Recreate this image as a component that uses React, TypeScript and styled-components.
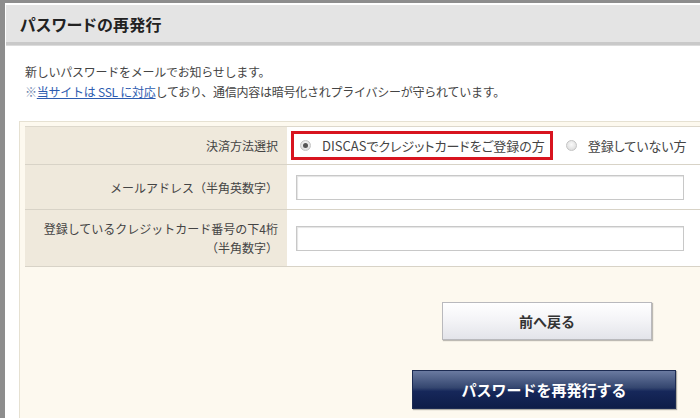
import styled, { createGlobalStyle } from 'styled-components';

const GlobalStyle = createGlobalStyle`
  html, body {
    margin: 0;
    padding: 0;
    background: #fff;
    overflow: hidden;
  }
  body {
    font-family: "Noto Sans CJK JP", "Noto Sans", sans-serif;
    color: #333;
  }
`;

const Page = styled.div`
  width: 740px;
  min-height: 418px;
  box-sizing: border-box;
  border-left: 5px solid #8d8d8d;
  border-top: 3px solid #8d8d8d;
  padding: 2px 0 0 1px;
`;

const Header = styled.div`
  height: 37px;
  background: #e4e4e4;
  border-bottom: 3px solid #c9c9c9;
  box-shadow: 0 1px 0 #dcdcdc;
  display: flex;
  align-items: center;
  padding-left: 14px;
`;

const Title = styled.h1`
  margin: 0;
  font-size: 16px;
  font-weight: 700;
  color: #222;
  letter-spacing: 0.3px;
  font-feature-settings: "palt";
`;

const Intro = styled.div`
  padding: 17px 0 0 19px;
  font-size: 12px;
  line-height: 20px;
  letter-spacing: -0.25px;
  color: #444;
`;

const Mark = styled.span`
  color: #6f86ad;
`;

const TextLink = styled.a`
  color: #2d5cb0;
  text-decoration: underline;
`;

const FormBox = styled.div`
  margin: 19px 0 0 13px;
  border: 1px solid #e6e1d2;
  border-right: none;
  background: #fdf9ef;
  padding: 4px 0 10px 5px;
`;

const Table = styled.div`
  display: grid;
  grid-template-columns: 262px 1fr;
  border-top: 1px solid #ddd8cc;
`;

const Label = styled.div<{ $h: number }>`
  height: ${(p) => p.$h}px;
  box-sizing: border-box;
  background: #efe9dc;
  border-bottom: 1px solid #d8d3c7;
  display: flex;
  flex-direction: column;
  justify-content: center;
  align-items: flex-end;
  padding-right: 9px;
  font-size: 12px;
  line-height: 19px;
  color: #444;
  text-align: right;
`;

const Cell = styled.div<{ $h: number }>`
  height: ${(p) => p.$h}px;
  box-sizing: border-box;
  background: #fff;
  border-bottom: 1px solid #d8d3c7;
  display: flex;
  align-items: center;
  padding-left: 9px;
`;

const RadioGroup = styled.div`
  display: flex;
  align-items: center;
  margin-left: -5px;
  font-size: 13px;
  font-feature-settings: "palt";
  color: #444;
`;

const RadioOption = styled.label<{ $marked?: boolean }>`
  display: flex;
  align-items: center;
  gap: 11px;
  height: 29px;
  box-sizing: border-box;
  padding: 0 5px 0 6px;
  border: 3px solid ${(p) => (p.$marked ? '#d8141f' : 'transparent')};
  margin-right: 4px;
`;

const Dot = styled.span<{ $on?: boolean }>`
  width: 11px;
  height: 11px;
  border-radius: 50%;
  box-sizing: border-box;
  border: 1px solid #c4c4c4;
  background: radial-gradient(circle at 50% 40%, #fafafa, #d6d6d6);
  display: flex;
  align-items: center;
  justify-content: center;
  &::after {
    content: '';
    width: 5px;
    height: 5px;
    border-radius: 50%;
    background: ${(p) => (p.$on ? '#555' : 'transparent')};
  }
`;

const TextInput = styled.input`
  width: 388px;
  height: 25px;
  box-sizing: border-box;
  border: 1px solid #c8c8c8;
  box-shadow: inset 1px 1px 1px #e4e4e4;
  background: #fff;
  outline: none;
`;

const Buttons = styled.div`
  width: 264px;
  margin: 35px 0 0 387px;
  display: flex;
  flex-direction: column;
  align-items: center;
  gap: 30px;
`;

const BackButton = styled.button`
  width: 210px;
  height: 38px;
  margin-left: 6px;
  border: 1px solid #b9b9bd;
  background: linear-gradient(#ffffff, #f3f3f6 50%, #e3e4ea);
  box-shadow: 1px 1px 1px rgba(0, 0, 0, 0.25);
  font-family: inherit;
  font-size: 14px;
  font-weight: 700;
  color: #333;
  cursor: pointer;
`;

const SubmitButton = styled.button`
  width: 264px;
  height: 39px;
  border: 1px solid #1c2b52;
  background: linear-gradient(#6a7aa0, #34466f 45%, #16275a 55%, #0e1d48);
  box-shadow: 1px 1px 1px rgba(0, 0, 0, 0.3);
  font-family: inherit;
  font-size: 15px;
  font-weight: 700;
  color: #fff;
  cursor: pointer;
`;

export default function App() {
  return (
    <>
      <GlobalStyle />
      <Page>
        <Header>
          <Title>パスワードの再発行</Title>
        </Header>
        <Intro>
          新しいパスワードをメールでお知らせします。
          <br />
          <Mark>※</Mark>
          <TextLink href="#">当サイトは SSL に対応</TextLink>
          しており、通信内容は暗号化されプライバシーが守られています。
        </Intro>
        <FormBox>
          <Table>
            <Label $h={38}>決済方法選択</Label>
            <Cell $h={38}>
              <RadioGroup>
                <RadioOption $marked>
                  <Dot $on />
                  DISCASでクレジットカードをご登録の方
                </RadioOption>
                <RadioOption>
                  <Dot />
                  登録していない方
                </RadioOption>
              </RadioGroup>
            </Cell>
            <Label $h={45}>メールアドレス（半角英数字）</Label>
            <Cell $h={45}>
              <TextInput type="text" />
            </Cell>
            <Label $h={57}>
              <span>登録しているクレジットカード番号の下4桁</span>
              <span>（半角数字）</span>
            </Label>
            <Cell $h={57}>
              <TextInput type="text" />
            </Cell>
          </Table>
          <Buttons>
            <BackButton>前へ戻る</BackButton>
            <SubmitButton>パスワードを再発行する</SubmitButton>
          </Buttons>
        </FormBox>
      </Page>
    </>
  );
}
